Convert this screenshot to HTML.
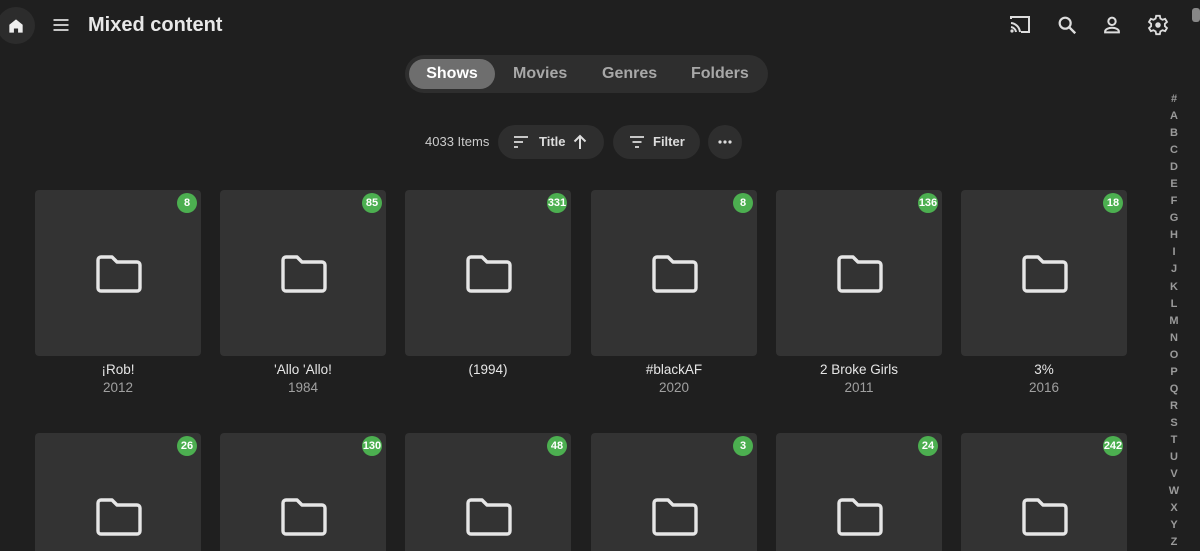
<!DOCTYPE html>
<html><head><meta charset="utf-8"><style>
*{margin:0;padding:0;box-sizing:border-box}
html,body{width:1200px;height:551px;overflow:hidden}
body{background:#1f1f1f;font-family:"Liberation Sans",sans-serif;color:#e6e6e6;position:relative}
.abs{position:absolute}
.home{left:-3px;top:7px;width:38px;height:37px;border-radius:50%;background:#2c2c2c}
.title{left:88px;top:14px;font-size:20px;font-weight:bold;color:#e8e8e8}
.tabs{left:405px;top:55px;width:363px;height:38px;border-radius:19px;background:#2e2e2e}
.tab{position:absolute;top:0;height:38px;line-height:38px;font-size:16px;font-weight:bold;color:#a8a8a8}
.tab.on{background:#6e6e6e;color:#fff;border-radius:16px;top:4px;height:30px;line-height:30px;width:86px;text-align:center;left:4px}
.pill{position:absolute;top:125px;height:34px;border-radius:17px;background:#2e2e2e;font-size:13px;font-weight:bold;line-height:34px;color:#ddd}
.card{position:absolute;width:166px;height:166px;border-radius:4px;background:#333}
.badge{position:absolute;right:4px;top:3px;min-width:20px;height:20px;border-radius:10px;background:#4caf50;color:#fff;font-size:11px;font-weight:bold;text-align:center;line-height:20px}
.fold{position:absolute;left:60px;top:64px}
.cap{position:absolute;width:166px;text-align:center;font-size:13.5px;line-height:18px}
.yr{color:#a0a0a0}
.az{left:1160px;width:28px;text-align:center;font-size:11px;font-weight:bold;color:#9a9a9a;line-height:17.05px;top:91px}
</style></head><body>
<div class="abs home"></div>
<svg class="abs" style="left:6px;top:16px" width="20" height="20" viewBox="0 0 24 24"><path d="M4 10.5 12 4l8 6.5V20h-5.5v-5h-5v5H4z" fill="#eee"/></svg>
<svg class="abs" style="left:51px;top:15px" width="20" height="20" viewBox="0 0 24 24"><path d="M3 6h18M3 12h18M3 18h18" stroke="#ddd" stroke-width="2"/></svg>
<div class="abs title">Mixed content</div>
<svg class="abs" style="left:1008px;top:14px" width="24" height="22" viewBox="0 0 24 22"><path d="M3 5V3h18v15h-8M3 9a10 10 0 0 1 9 9M3 13a6 6 0 0 1 5 5" fill="none" stroke="#ddd" stroke-width="2"/><circle cx="4" cy="17" r="1.6" fill="#ddd"/></svg>
<svg class="abs" style="left:1056px;top:14px" width="22" height="22" viewBox="0 0 24 24"><circle cx="10" cy="10" r="6" fill="none" stroke="#ddd" stroke-width="2.4"/><path d="M14.5 14.5 21 21" stroke="#ddd" stroke-width="2.6"/></svg>
<svg class="abs" style="left:1101px;top:14px" width="22" height="22" viewBox="0 0 24 24"><circle cx="12" cy="8" r="4" fill="none" stroke="#ddd" stroke-width="2.2"/><path d="M4.5 20v-1c0-2.5 4-4 7.5-4s7.5 1.5 7.5 4v1z" fill="none" stroke="#ddd" stroke-width="2.2"/></svg>
<svg class="abs" style="left:1147px;top:14px" width="22" height="22" viewBox="0 0 24 24"><path d="M10 2h4l.6 3 2.3 1.3 2.9-1 2 3.4-2.3 2v2.6l2.3 2-2 3.4-2.9-1-2.3 1.3-.6 3h-4l-.6-3-2.3-1.3-2.9 1-2-3.4 2.3-2v-2.6l-2.3-2 2-3.4 2.9 1L9.4 5z" fill="none" stroke="#ddd" stroke-width="2"/><circle cx="12" cy="12" r="3" fill="#ddd"/></svg>
<div class="abs" style="left:1192px;top:8px;width:8px;height:14px;border-radius:3px;background:#888"></div>
<div class="abs tabs">
<div class="tab on">Shows</div>
<div class="tab" style="left:108px">Movies</div>
<div class="tab" style="left:197px">Genres</div>
<div class="tab" style="left:286px">Folders</div>
</div>
<div class="abs" style="left:425px;top:134px;font-size:13px;color:#ccc">4033 Items</div>
<div class="pill" style="left:498px;width:106px"><svg class="abs" style="left:15px;top:10px" width="16" height="14" viewBox="0 0 16 14"><path d="M1 2h14M1 7h9M1 12h4" stroke="#ddd" stroke-width="1.8"/></svg><span class="abs" style="left:41px">Title</span><svg class="abs" style="left:75px;top:9px" width="14" height="16" viewBox="0 0 14 16"><path d="M7 15V2M1.5 7.5 7 2l5.5 5.5" fill="none" stroke="#ddd" stroke-width="2"/></svg></div>
<div class="pill" style="left:613px;width:87px"><svg class="abs" style="left:16px;top:10px" width="16" height="14" viewBox="0 0 16 14"><path d="M1 2h14M3.5 7h9M6 12h4" stroke="#ddd" stroke-width="1.8"/></svg><span class="abs" style="left:40px">Filter</span></div>
<div class="pill" style="left:708px;width:34px"><svg class="abs" style="left:10px;top:15px" width="14" height="4" viewBox="0 0 14 4"><circle cx="2" cy="2" r="1.6" fill="#ddd"/><circle cx="7" cy="2" r="1.6" fill="#ddd"/><circle cx="12" cy="2" r="1.6" fill="#ddd"/></svg></div>
<div id="grid"></div>
<div class="abs az">#<br>A<br>B<br>C<br>D<br>E<br>F<br>G<br>H<br>I<br>J<br>K<br>L<br>M<br>N<br>O<br>P<br>Q<br>R<br>S<br>T<br>U<br>V<br>W<br>X<br>Y<br>Z</div>
<script>
var xs=[35,220,405,591,776,961];
var r1=[["8","¡Rob!","2012"],["85","'Allo 'Allo!","1984"],["331","(1994)",""],["8","#blackAF","2020"],["136","2 Broke Girls","2011"],["18","3%","2016"]];
var r2=["26","130","48","3","24","242"];
var f='<svg class="fold" width="48" height="40" viewBox="0 0 48 40"><path d="M3 6a3 3 0 0 1 3-3h11l5 5h20a3 3 0 0 1 3 3v23a3 3 0 0 1-3 3H6a3 3 0 0 1-3-3z" fill="none" stroke="#e6e6e6" stroke-width="3.4" stroke-linejoin="round"/></svg>';
var h='';
xs.forEach(function(x,i){
h+='<div class="card" style="left:'+x+'px;top:190px"><div class="badge">'+r1[i][0]+'</div>'+f+'</div>';
h+='<div class="cap" style="left:'+x+'px;top:361px">'+r1[i][1]+'<br><span class="yr">'+r1[i][2]+'</span></div>';
h+='<div class="card" style="left:'+x+'px;top:433px"><div class="badge">'+r2[i]+'</div>'+f+'</div>';
});
document.getElementById('grid').innerHTML=h;
</script>
</body></html>
